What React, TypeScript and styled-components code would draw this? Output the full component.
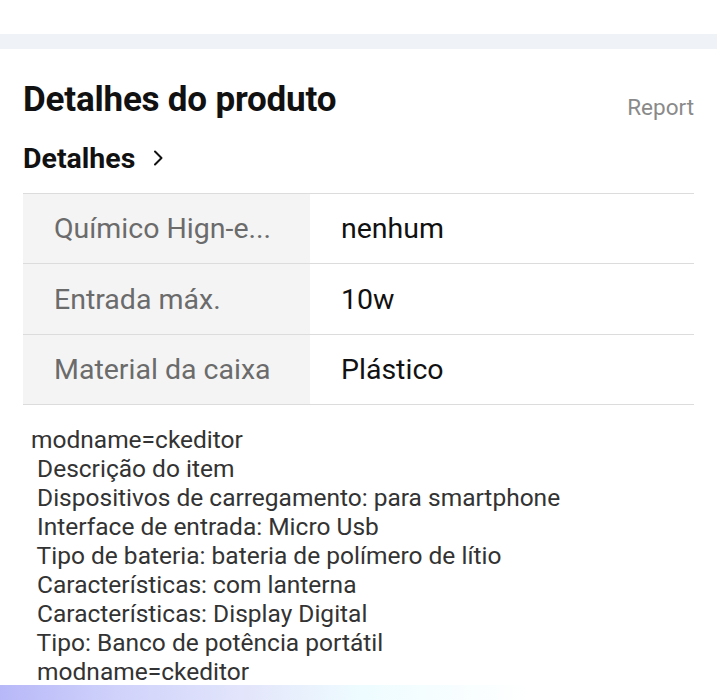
import React from "react";
import styled, { createGlobalStyle } from "styled-components";

const Global = createGlobalStyle`
  html, body { margin: 0; padding: 0; background: #fff; }
  body { font-family: Roboto, "Noto Sans", Arial, sans-serif; }
`;

const Page = styled.div`
  width: 717px;
  height: 700px;
  overflow: hidden;
  position: relative;
  background: #fff;
  display: flex;
  flex-direction: column;
`;

const TopSpace = styled.div`
  height: 34px;
`;

const Divider = styled.div`
  height: 15px;
  background: #eff2f7;
`;

const Section = styled.section`
  padding: 0 23px;
  display: flex;
  flex-direction: column;
`;

const Header = styled.div`
  display: flex;
  justify-content: space-between;
  align-items: baseline;
  margin-top: 30px;
  height: 40px;
`;

const Title = styled.h1`
  margin: 0;
  font-size: 35px;
  font-weight: 700;
  color: #111;
  letter-spacing: -0.2px;
`;

const Report = styled.span`
  font-size: 22.5px;
  color: #8a8a8a;
  position: relative;
  top: 4px;
`;

const SubHeader = styled.div`
  display: flex;
  align-items: center;
  gap: 17px;
  margin-top: 20px;
  height: 38px;
`;

const SubTitle = styled.h2`
  margin: 0;
  font-size: 28.5px;
  font-weight: 700;
  color: #111;
`;

const Table = styled.div`
  margin-top: 16px;
  border-top: 1px solid #dcdcdc;
  display: flex;
  flex-direction: column;
`;

const Row = styled.div`
  box-sizing: border-box;
  display: grid;
  grid-template-columns: 287px 1fr;
  height: 70.4px;
  border-bottom: 1px solid #dcdcdc;
`;

const Label = styled.div`
  background: #f4f4f4;
  color: #6b6b6b;
  font-size: 28.5px;
  display: flex;
  align-items: center;
  padding-left: 31px;
  white-space: nowrap;
  overflow: hidden;
`;

const Value = styled.div`
  color: #111;
  font-size: 28.5px;
  display: flex;
  align-items: center;
  padding-left: 31px;
`;

const Description = styled.div`
  padding: 20px 8px 0 31px;
  font-size: 24.5px;
  line-height: 29px;
  color: #333;
  white-space: pre;
`;

const BottomGlow = styled.div`
  position: absolute;
  left: 0;
  bottom: 0;
  width: 530px;
  height: 15px;
  background: linear-gradient(90deg, #b7b8f8 0%, #d0d2fb 22%, #e4e7fb 48%, #eefcff 68%, #ffffff 100%);
`;

const Chevron = () => (
  <svg width="12" height="18" viewBox="0 0 12 18" fill="none">
    <path d="M3 2.5 L9.5 9 L3 15.5" stroke="#111" strokeWidth="2" strokeLinecap="round" strokeLinejoin="round" />
  </svg>
);

const rows = [
  { label: "Químico Hign-e...", value: "nenhum" },
  { label: "Entrada máx.", value: "10w" },
  { label: "Material da caixa", value: "Plástico" },
];

const desc = [
  "modname=ckeditor",
  " Descrição do item",
  " Dispositivos de carregamento: para smartphone",
  " Interface de entrada: Micro Usb",
  " Tipo de bateria: bateria de polímero de lítio",
  " Características: com lanterna",
  " Características: Display Digital",
  " Tipo: Banco de potência portátil",
  " modname=ckeditor",
].join("\n");

export default function App() {
  return (
    <Page>
      <Global />
      <TopSpace />
      <Divider />
      <Section>
        <Header>
          <Title>Detalhes do produto</Title>
          <Report>Report</Report>
        </Header>
        <SubHeader>
          <SubTitle>Detalhes</SubTitle>
          <Chevron />
        </SubHeader>
        <Table>
          {rows.map((r) => (
            <Row key={r.label}>
              <Label>{r.label}</Label>
              <Value>{r.value}</Value>
            </Row>
          ))}
        </Table>
      </Section>
      <Description>{desc}</Description>
      <BottomGlow />
    </Page>
  );
}
